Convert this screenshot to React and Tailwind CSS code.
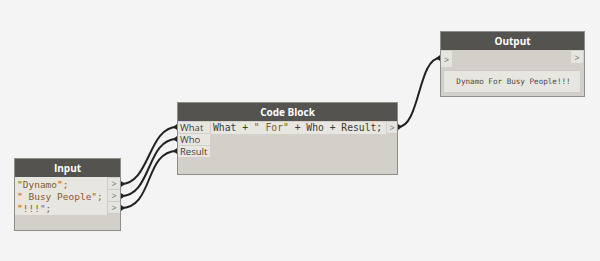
import React from "react";

const sans = { fontFamily: '"Open Sans", "Noto Sans", sans-serif' };
const mono = { fontFamily: '"DejaVu Sans Mono", "Liberation Mono", monospace' };

function Port({ className = "" }) {
  return (
    <div className={`flex items-center justify-center bg-[#e6e4df] text-[#6b6a66] text-[9px] leading-none border-b border-[#cfccc5] ${className}`} style={sans}>
      &gt;
    </div>
  );
}

function Header({ title }) {
  return (
    <div className="h-[18px] bg-[#545350] flex items-center justify-center text-white text-[10px] font-bold" style={sans}>
      {title}
    </div>
  );
}

export default function App() {
  return (
    <div className="relative w-[600px] h-[261px] bg-[#f4f4f4] overflow-hidden">
      {/* wires */}
      <svg className="absolute inset-0" width="600" height="261" viewBox="0 0 600 261">
        <g fill="none" stroke="#222" strokeWidth="2">
          <path d="M121 184 C150 184, 148 127, 177 127" />
          <path d="M121 196 C152 196, 146 139, 177 139" />
          <path d="M121 208 C154 208, 144 151, 177 151" />
          <path d="M398 127 C420 127, 418 58, 440 58" />
        </g>
        <g fill="#222">
          <path d="M121 181 L125 184 L121 187 Z" />
          <path d="M121 193 L125 196 L121 199 Z" />
          <path d="M121 205 L125 208 L121 211 Z" />
          <path d="M177 124 L173 127 L177 130 Z" />
          <path d="M177 136 L173 139 L177 142 Z" />
          <path d="M177 148 L173 151 L177 154 Z" />
          <path d="M398 124 L402 127 L398 130 Z" />
          <path d="M440 55 L436 58 L440 61 Z" />
        </g>
      </svg>

      {/* Input node */}
      <div className="absolute left-[14px] top-[158px] w-[107px] h-[73px] bg-[#d3d0c9] border border-[#8f8d88] flex flex-col">
        <Header title="Input" />
        <div className="flex">
          <div className="flex-1 bg-[#e8e6e1] pl-[2px] pt-[2px] text-[9.5px] leading-[12px] text-[#8a5a2e]" style={mono}>
            <div>"Dynamo";</div>
            <div>" Busy People";</div>
            <div>"!!!";</div>
          </div>
          <div className="w-[13px] flex flex-col pt-[1px] bg-[#d3d0c9] border-l border-[#cfccc5]">
            <Port className="h-[12px]" />
            <Port className="h-[12px]" />
            <Port className="h-[12px]" />
          </div>
        </div>
      </div>

      {/* Code Block node */}
      <div className="absolute left-[177px] top-[102px] w-[221px] h-[73px] bg-[#d3d0c9] border border-[#8f8d88] flex flex-col">
        <Header title="Code Block" />
        <div className="flex pt-[1px]">
          <div className="w-[32px] flex flex-col text-[9.5px] leading-none text-[#3f3e3b]" style={sans}>
            <div className="h-[12px] flex items-center pl-[2px] bg-[#e8e6e1] border-b border-[#d3d0c9]">What</div>
            <div className="h-[12px] flex items-center pl-[2px] bg-[#e8e6e1] border-b border-[#d3d0c9]">Who</div>
            <div className="h-[12px] flex items-center pl-[2px] bg-[#e8e6e1] border-b border-[#d3d0c9]">Result</div>
          </div>
          <div className="ml-[1px] w-[175px] h-[12px] bg-[#e8e6e1] pl-[2px] text-[9.7px] leading-[12px] text-[#3c3b38] whitespace-pre" style={mono}>
            What + <span className="text-[#8a5a2e]">" For"</span> + Who + Result;
          </div>
          <Port className="ml-[1px] w-[10px] h-[12px]" />
        </div>
      </div>

      {/* Output node */}
      <div className="absolute left-[440px] top-[31px] w-[145px] h-[66px] bg-[#d3d0c9] border border-[#8f8d88] flex flex-col">
        <Header title="Output" />
        <div className="flex justify-between pt-[1px]">
          <Port className="w-[11px] h-[16px] border-none" />
          <Port className="w-[12px] h-[12px] border-none mr-[1px]" />
        </div>
        <div className="ml-[2px] mr-[3px] mt-[3px] h-[23px] bg-[#e8e6e1] border border-[#cfccc5] flex items-center justify-center pl-[3px] text-[7.6px] text-[#4a4946]" style={mono}>
          Dynamo For Busy People!!!
        </div>
      </div>
    </div>
  );
}
